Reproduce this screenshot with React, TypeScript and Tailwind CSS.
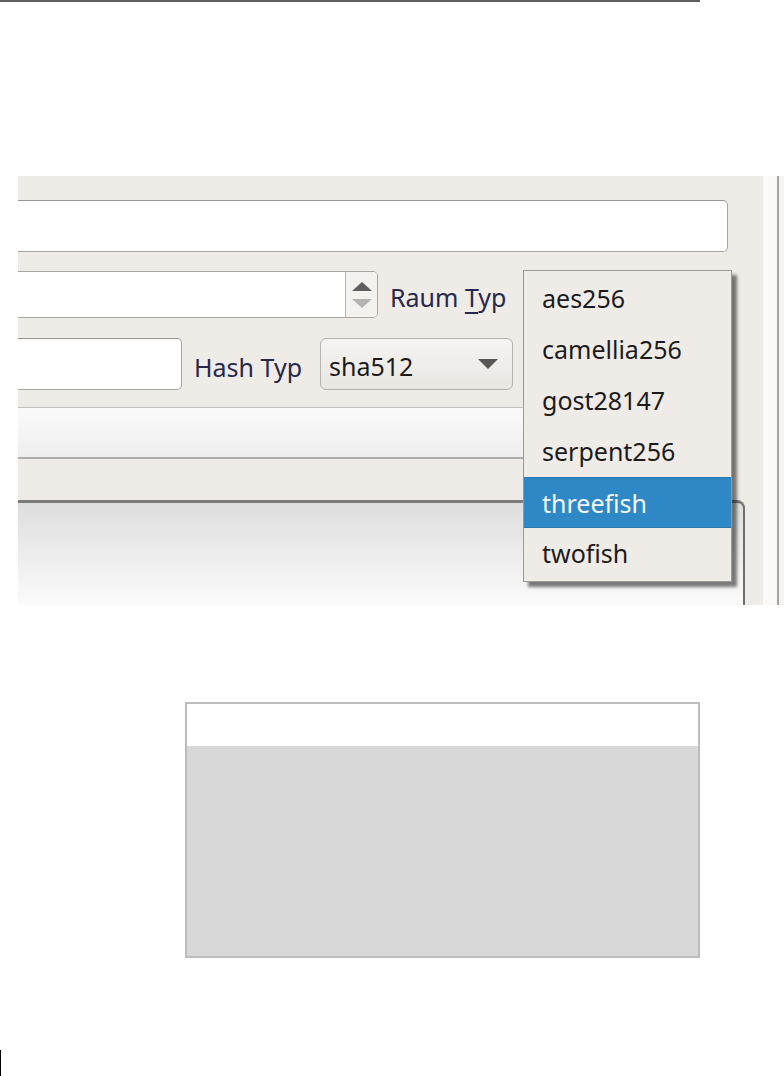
import clsx from "clsx";

const cipherTypes = ["aes256", "camellia256", "gost28147", "serpent256", "threefish", "twofish"];
const selected = "threefish";

const TextField = ({ className }: { className?: string }) => (
  <div
    className={clsx(
      "rounded-[5px] border border-[#a9a6a2] border-t-[#9a9793] bg-white",
      className
    )}
  />
);

const Label = ({ children, className }: { children: React.ReactNode; className?: string }) => (
  <span className={clsx("pt-[6px] text-[25px] leading-none text-[#28284a]", className)}>{children}</span>
);

const App = () => {
  return (
    <div className="h-[1076px] w-[784px] overflow-hidden bg-white font-['Noto_Sans',sans-serif]">
      <div className="h-[2px] w-[700px] bg-[#5f5f5f]" />

      {/* dialog screenshot */}
      <div className="relative mt-[174px] ml-[18px] flex h-[429px] w-[766px] overflow-hidden bg-[#efebe7]">
        <div className="flex w-[745px] flex-col pt-[24px]">
          <TextField className="ml-[-8px] h-[52px] w-[718px]" />

          <div className="mt-[19px] flex h-[47px] items-center">
            <div className="ml-[-8px] flex h-[47px] w-[368px] overflow-hidden rounded-[5px] border border-[#a9a6a2] bg-white">
              <div className="flex-1" />
              <div className="flex w-[32px] flex-col items-center justify-center gap-[8px] border-l border-[#b9b6b2] bg-[#f4f2ef]">
                <svg width="20" height="9" viewBox="0 0 20 9">
                  <path d="M10 0 L20 9 L0 9 Z" fill="#5e5e5e" />
                </svg>
                <svg width="20" height="9" viewBox="0 0 20 9">
                  <path d="M0 0 L20 0 L10 9 Z" fill="#b4b4b4" />
                </svg>
              </div>
            </div>
            <Label className="ml-[12px]">
              Raum <span className="underline decoration-[1.5px] underline-offset-[5px]">T</span>yp
            </Label>
          </div>

          <div className="mt-[20px] flex h-[52px] items-center">
            <TextField className="ml-[-8px] h-[52px] w-[172px]" />
            <Label className="ml-[12px]">Hash Typ</Label>
            <div className="ml-[18px] flex h-[52px] w-[193px] items-center justify-between rounded-[6px] border border-[#b6b2ad] bg-linear-to-b from-[#f6f4f2] to-[#e9e6e2] pl-[8px] pr-[14px]">
              <span className="pt-[4px] text-[25px] leading-none text-[#1d1a1c]">sha512</span>
              <svg width="20" height="10" viewBox="0 0 20 10">
                <path d="M0 0 L20 0 L10 10 Z" fill="#575757" />
              </svg>
            </div>
          </div>

          <div className="mt-[17px] ml-[-4px] h-[52px] w-[714px] border-t border-b-2 border-t-[#c2c2c2] border-b-[#adadad] bg-linear-to-b from-[#fafafa] to-[#eeeeee]" />

          <div className="mt-[41px] ml-[-4px] mr-[18px] flex-1 rounded-tr-[8px] border-t-[3px] border-r-2 border-t-[#7c7c7c] border-r-[#6e6e6e] bg-linear-to-b from-[#dedede] to-[#fbfbfb]" />
        </div>

        {/* right window edge */}
        <div className="flex w-[21px]">
          <div className="w-[14px] bg-[#fbf9f7]" />
          <div className="w-[2px] bg-[#a3a3a3]" />
          <div className="flex-1 bg-[#f6f4f1]" />
        </div>

        {/* open combo popup */}
        <div className="absolute left-[505px] top-[94px] w-[209px] border border-[#9c9994] bg-[#efebe7] py-[2px] shadow-[5px_5px_3px_rgba(0,0,0,0.5)]">
          {cipherTypes.map((item) => (
            <div
              key={item}
              className={clsx(
                "h-[51px] pl-[18px] text-[25px] leading-[51px]",
                item === selected
                  ? "border-y border-[#2a77ac] bg-[#2e88c6] leading-[49px] text-[#f4f8fc]"
                  : "text-[#1d1a1c]"
              )}
            >
              {item}
            </div>
          ))}
        </div>
      </div>

      {/* placeholder box */}
      <div className="mt-[97px] ml-[185px] flex h-[256px] w-[515px] flex-col border-2 border-[#bdbdbd]">
        <div className="h-[42px] bg-white" />
        <div className="flex-1 bg-[#d8d8d8]" />
      </div>

      <div className="mt-[92px] h-[26px] w-px bg-black" />
    </div>
  );
};

export default App;
